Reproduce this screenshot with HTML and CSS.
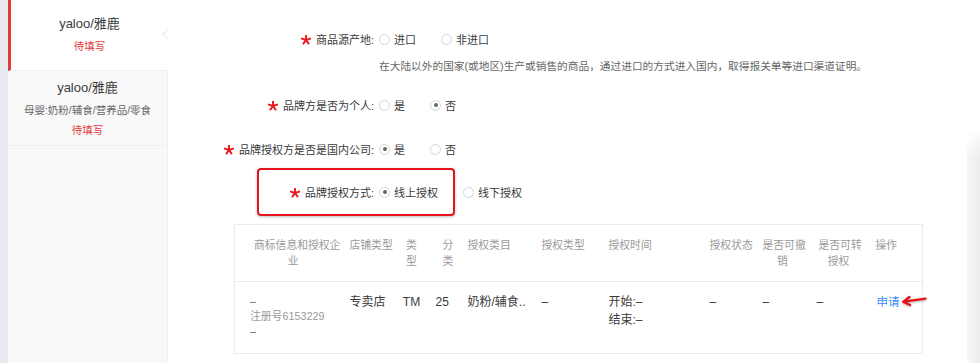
FILE: index.html
```html
<!DOCTYPE html>
<html lang="zh">
<head>
<meta charset="utf-8">
<title>品牌授权</title>
<link rel="stylesheet" href="styles.css">
</head>
<body>
<div class="page">
  <div class="strip"></div>
  <aside class="sidebar">
    <div class="brand-item active first">
      <div class="brand-name">yaloo/雅鹿</div>
      <div class="brand-status">待填写</div>
      <span class="notch"></span>
    </div>
    <div class="brand-item">
      <div class="brand-name">yaloo/雅鹿</div>
      <div class="brand-cat">母婴:奶粉/辅食/营养品/零食</div>
      <div class="brand-status">待填写</div>
    </div>
  </aside>
  <main class="main">
    <div class="row r1">
      <div class="label"><svg class="star" viewBox="0 0 10 10" width="10" height="10"><g stroke="#e8161d" stroke-width="1.9" stroke-linecap="round"><line x1="5" y1="5" x2="5" y2="0.6"/><line x1="5" y1="5" x2="9.2" y2="3.6"/><line x1="5" y1="5" x2="7.6" y2="8.6"/><line x1="5" y1="5" x2="2.4" y2="8.6"/><line x1="5" y1="5" x2="0.8" y2="3.6"/></g></svg>商品源产地:</div>
      <div class="opts">
        <span class="opt"><span class="radio"></span>进口</span>
        <span class="opt"><span class="radio"></span>非进口</span>
      </div>
    </div>
    <div class="help">在大陆以外的国家(或地区)生产或销售的商品，通过进口的方式进入国内，取得报关单等进口渠道证明。</div>
    <div class="row r2">
      <div class="label"><svg class="star" viewBox="0 0 10 10" width="10" height="10"><g stroke="#e8161d" stroke-width="1.9" stroke-linecap="round"><line x1="5" y1="5" x2="5" y2="0.6"/><line x1="5" y1="5" x2="9.2" y2="3.6"/><line x1="5" y1="5" x2="7.6" y2="8.6"/><line x1="5" y1="5" x2="2.4" y2="8.6"/><line x1="5" y1="5" x2="0.8" y2="3.6"/></g></svg>品牌方是否为个人:</div>
      <div class="opts">
        <span class="opt"><span class="radio"></span>是</span>
        <span class="opt"><span class="radio on"></span>否</span>
      </div>
    </div>
    <div class="row r3">
      <div class="label"><svg class="star" viewBox="0 0 10 10" width="10" height="10"><g stroke="#e8161d" stroke-width="1.9" stroke-linecap="round"><line x1="5" y1="5" x2="5" y2="0.6"/><line x1="5" y1="5" x2="9.2" y2="3.6"/><line x1="5" y1="5" x2="7.6" y2="8.6"/><line x1="5" y1="5" x2="2.4" y2="8.6"/><line x1="5" y1="5" x2="0.8" y2="3.6"/></g></svg>品牌授权方是否是国内公司:</div>
      <div class="opts">
        <span class="opt"><span class="radio on"></span>是</span>
        <span class="opt"><span class="radio"></span>否</span>
      </div>
    </div>
    <div class="row r4">
      <span class="highlight"></span>
      <div class="label"><svg class="star" viewBox="0 0 10 10" width="10" height="10"><g stroke="#e8161d" stroke-width="1.9" stroke-linecap="round"><line x1="5" y1="5" x2="5" y2="0.6"/><line x1="5" y1="5" x2="9.2" y2="3.6"/><line x1="5" y1="5" x2="7.6" y2="8.6"/><line x1="5" y1="5" x2="2.4" y2="8.6"/><line x1="5" y1="5" x2="0.8" y2="3.6"/></g></svg>品牌授权方式:</div>
      <div class="opts">
        <span class="opt"><span class="radio on"></span>线上授权</span>
        <span class="opt"><span class="radio"></span>线下授权</span>
      </div>
    </div>
    <table class="auth-table">
      <colgroup>
        <col class="w1"><col class="w2"><col class="w3"><col class="w4"><col class="w5"><col class="w6"><col class="w7"><col class="w8"><col class="w9"><col class="w10"><col class="w11">
      </colgroup>
      <thead>
        <tr>
          <th class="c1">商标信息和授权企<br>业</th>
          <th>店铺类型</th>
          <th class="c3">类<br>型</th>
          <th class="c4">分<br>类</th>
          <th>授权类目</th>
          <th>授权类型</th>
          <th>授权时间</th>
          <th>授权状态</th>
          <th class="c9">是否可撤<br>销</th>
          <th class="c10">是否可转<br>授权</th>
          <th class="c11">操作</th>
        </tr>
      </thead>
      <tbody>
        <tr>
          <td class="c1"><div class="dash">–</div><div class="reg">注册号6153229</div><div class="dash">–</div></td>
          <td>专卖店</td>
          <td class="c3">TM</td>
          <td class="c4">25</td>
          <td>奶粉/辅食..</td>
          <td>–</td>
          <td class="c7">开始:–<br>结束:–</td>
          <td>–</td>
          <td>–</td>
          <td>–</td>
          <td class="c11"><a class="apply">申请</a><svg class="arrow" viewBox="0 0 26 12" width="26" height="12"><g fill="none" stroke="#e8101a" stroke-width="2.3" stroke-linecap="round" stroke-linejoin="round"><path d="M24.5 3.6 L3 6.6"/><path d="M8.4 2 L2.2 6.8 L9 10"/></g></svg></td>
        </tr>
      </tbody>
    </table>
  </main>
  <div class="edge"></div>
</div>
</body>
</html>
```

FILE: styles.css
```css
html, body {
  margin: 0;
  padding: 0;
  width: 980px;
  height: 363px;
  overflow: hidden;
  background: #fff;
}
body {
  font-family: "Liberation Sans", "Noto Sans CJK SC", sans-serif;
  color: #333;
}
.page {
  display: flex;
  height: 363px;
  position: relative;
}
.strip {
  width: 8px;
  flex: none;
  background: #e8ecf0;
}
.sidebar {
  width: 159px;
  flex: none;
  background: #f9f9f9;
  border-right: 1px solid #efefef;
}
.brand-item {
  position: relative;
  text-align: center;
  border-bottom: 1px solid #f0f0f0;
  padding: 7px 0 6px;
}
.brand-item.first {
  padding: 14px 0 15px;
}
.brand-item.active {
  background: #fff;
  border-left: 3px solid #e4393c;
  margin-right: -1px;
}
.brand-name {
  font-size: 13px;
  line-height: 20px;
  color: #3c3c3c;
}
.brand-cat {
  font-size: 10.5px;
  line-height: 18px;
  margin-top: 3px;
  color: #666;
}
.brand-status {
  font-size: 10.5px;
  line-height: 18px;
  margin-top: 3px;
  color: #e4393c;
}
.brand-item .brand-cat + .brand-status {
  margin-top: 2px;
}
.notch {
  position: absolute;
  right: -4px;
  top: 30px;
  width: 7px;
  height: 7px;
  background: #fff;
  border-left: 1px solid #e6e6e6;
  border-bottom: 1px solid #e6e6e6;
  transform: rotate(45deg);
}
.main {
  flex: 1;
  padding-top: 29px;
}
.row {
  display: flex;
  align-items: center;
  height: 20px;
  position: relative;
}
.r2 { margin-top: 19px; }
.r3 { margin-top: 24px; }
.r4 { margin-top: 23px; }
.label {
  width: 206px;
  flex: none;
  display: flex;
  justify-content: flex-end;
  align-items: center;
  font-size: 11px;
  color: #3a3a3a;
  white-space: nowrap;
}
.star {
  margin-right: 5px;
  margin-top: 2px;
  flex: none;
}
.opts {
  display: flex;
  align-items: center;
  margin-left: 5px;
}
.opt {
  display: inline-flex;
  align-items: center;
  gap: 4px;
  margin-right: 25px;
  font-size: 11px;
  color: #3a3a3a;
}
.radio {
  width: 11px;
  height: 11px;
  box-sizing: border-box;
  border: 1px solid #d6d6d6;
  border-radius: 50%;
  background: #fff;
  display: inline-flex;
  align-items: center;
  justify-content: center;
}
.radio.on::after {
  content: "";
  width: 4px;
  height: 4px;
  border-radius: 50%;
  background: #666;
}
.help {
  margin-top: 7px;
  padding-left: 211px;
  font-size: 10.7px;
  line-height: 20px;
  color: #666;
  white-space: nowrap;
}
.highlight {
  position: absolute;
  left: 89px;
  top: -14px;
  width: 198px;
  height: 48px;
  box-sizing: border-box;
  border: 2px solid #e5141b;
  border-radius: 4px;
  box-shadow: 0 1px 3px rgba(0, 0, 0, 0.25);
  pointer-events: none;
}
.auth-table {
  margin-top: 22px;
  margin-left: 66px;
  width: 688px;
  table-layout: fixed;
  border-collapse: collapse;
  border: 1px solid #ebebeb;
}
.w1 { width: 109px; }
.w2 { width: 53px; }
.w3 { width: 30px; }
.w4 { width: 35px; }
.w5 { width: 74px; }
.w6 { width: 67px; }
.w7 { width: 101px; }
.w8 { width: 53px; }
.w9 { width: 54px; }
.w10 { width: 57px; }
.w11 { width: 55px; }
.auth-table th {
  font-weight: normal;
  font-size: 10.8px;
  line-height: 16px;
  color: #9a9a9a;
  text-align: left;
  vertical-align: top;
  padding: 12px 0 0 6px;
  height: 44px;
  border-bottom: 1px solid #ebebeb;
  white-space: nowrap;
}
.auth-table th.c1 {
  padding-left: 19px;
  padding-right: 11px;
  text-align: center;
}
.auth-table th.c3 {
  text-align: center;
  padding: 12px 6px 0;
}
.auth-table th.c4 { padding-left: 16px; }
.auth-table th.c9 { text-align: center; padding-right: 8px; }
.auth-table th.c10 { padding-left: 8px; text-align: center; padding-right: 9px; }
.auth-table th.c11 { padding-left: 8px; }
.auth-table td {
  font-size: 12px;
  line-height: 18px;
  color: #3a3a3a;
  vertical-align: top;
  padding: 11px 0 0 6px;
  height: 59px;
  white-space: nowrap;
  overflow: visible;
}
.auth-table td.c1 {
  padding-left: 15px;
  padding-top: 12px;
  line-height: 15px;
  font-size: 10.8px;
}
.dash { color: #666; }
.reg { color: #999; }
.auth-table td.c3 { text-align: center; padding: 11px 6px 0; }
.auth-table td.c4 { padding-left: 9px; }
.auth-table td.c11 { padding-left: 9px; }
.apply {
  color: #3b8af5;
  font-size: 11.5px;
}
.arrow {
  vertical-align: top;
  margin-left: 1px;
  margin-top: 2px;
  filter: drop-shadow(0 1px 1px rgba(0, 0, 0, 0.3));
}
.edge {
  position: absolute;
  right: 0;
  top: 128px;
  bottom: 0;
  width: 13px;
  background: linear-gradient(to right, #f7f7f7, #ececec);
  box-shadow: -3px 0 6px rgba(0, 0, 0, 0.04);
  -webkit-mask-image: linear-gradient(to bottom, transparent, #000 30px);
  mask-image: linear-gradient(to bottom, transparent, #000 30px);
}
```
